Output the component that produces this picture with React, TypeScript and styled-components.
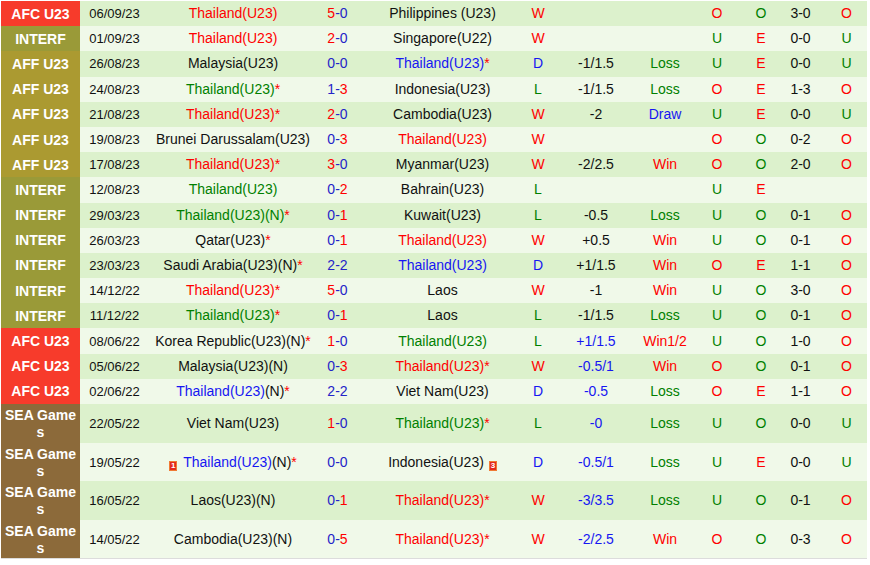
import React from 'react';
import styled, { createGlobalStyle } from 'styled-components';

const tones = {
  red: '#ff0000',
  blue: '#1616f2',
  navy: '#2424c8',
  green: '#008000',
  black: '#111111',
};

type Tone = keyof typeof tones;
type Part = [string, Tone];
type Team = { parts: Part[]; star?: boolean; card?: string };
type League = 'AFC U23' | 'INTERF' | 'AFF U23' | 'SEA Games';

type Match = {
  league: League;
  date: string;
  home: Team;
  score: [number, number];
  away: Team;
  wl: 'W' | 'D' | 'L';
  hcp: string;
  hcpBlue?: boolean;
  res: string;
  uo: string;
  eo: string;
  ht: string;
  last: string;
};

const leagueBg: Record<League, string> = {
  'AFC U23': '#f73b2b',
  INTERF: '#9a9a38',
  'AFF U23': '#ab9a31',
  'SEA Games': '#8c6a3a',
};

const team = (name: string, tone: Tone = 'black', star = false): Team => ({
  parts: [[name, tone]],
  star,
});

const TH = 'Thailand(U23)';

const matches: Match[] = [
  { league: 'AFC U23', date: '06/09/23', home: team(TH, 'red'), score: [5, 0], away: team('Philippines (U23)'), wl: 'W', hcp: '', res: '', uo: 'O', eo: 'O', ht: '3-0', last: 'O' },
  { league: 'INTERF', date: '01/09/23', home: team(TH, 'red'), score: [2, 0], away: team('Singapore(U22)'), wl: 'W', hcp: '', res: '', uo: 'U', eo: 'E', ht: '0-0', last: 'U' },
  { league: 'AFF U23', date: '26/08/23', home: team('Malaysia(U23)'), score: [0, 0], away: team(TH, 'blue', true), wl: 'D', hcp: '-1/1.5', res: 'Loss', uo: 'U', eo: 'E', ht: '0-0', last: 'U' },
  { league: 'AFF U23', date: '24/08/23', home: team(TH, 'green', true), score: [1, 3], away: team('Indonesia(U23)'), wl: 'L', hcp: '-1/1.5', res: 'Loss', uo: 'O', eo: 'E', ht: '1-3', last: 'O' },
  { league: 'AFF U23', date: '21/08/23', home: team(TH, 'red', true), score: [2, 0], away: team('Cambodia(U23)'), wl: 'W', hcp: '-2', res: 'Draw', uo: 'U', eo: 'E', ht: '0-0', last: 'U' },
  { league: 'AFF U23', date: '19/08/23', home: team('Brunei Darussalam(U23)'), score: [0, 3], away: team(TH, 'red'), wl: 'W', hcp: '', res: '', uo: 'O', eo: 'O', ht: '0-2', last: 'O' },
  { league: 'AFF U23', date: '17/08/23', home: team(TH, 'red', true), score: [3, 0], away: team('Myanmar(U23)'), wl: 'W', hcp: '-2/2.5', res: 'Win', uo: 'O', eo: 'O', ht: '2-0', last: 'O' },
  { league: 'INTERF', date: '12/08/23', home: team(TH, 'green'), score: [0, 2], away: team('Bahrain(U23)'), wl: 'L', hcp: '', res: '', uo: 'U', eo: 'E', ht: '', last: '' },
  { league: 'INTERF', date: '29/03/23', home: team('Thailand(U23)(N)', 'green', true), score: [0, 1], away: team('Kuwait(U23)'), wl: 'L', hcp: '-0.5', res: 'Loss', uo: 'U', eo: 'O', ht: '0-1', last: 'O' },
  { league: 'INTERF', date: '26/03/23', home: team('Qatar(U23)', 'black', true), score: [0, 1], away: team(TH, 'red'), wl: 'W', hcp: '+0.5', res: 'Win', uo: 'U', eo: 'O', ht: '0-1', last: 'O' },
  { league: 'INTERF', date: '23/03/23', home: team('Saudi Arabia(U23)(N)', 'black', true), score: [2, 2], away: team(TH, 'blue'), wl: 'D', hcp: '+1/1.5', res: 'Win', uo: 'O', eo: 'E', ht: '1-1', last: 'O' },
  { league: 'INTERF', date: '14/12/22', home: team(TH, 'red', true), score: [5, 0], away: team('Laos'), wl: 'W', hcp: '-1', res: 'Win', uo: 'U', eo: 'O', ht: '3-0', last: 'O' },
  { league: 'INTERF', date: '11/12/22', home: team(TH, 'green', true), score: [0, 1], away: team('Laos'), wl: 'L', hcp: '-1/1.5', res: 'Loss', uo: 'U', eo: 'O', ht: '0-1', last: 'O' },
  { league: 'AFC U23', date: '08/06/22', home: team('Korea Republic(U23)(N)', 'black', true), score: [1, 0], away: team(TH, 'green'), wl: 'L', hcp: '+1/1.5', hcpBlue: true, res: 'Win1/2', uo: 'U', eo: 'O', ht: '1-0', last: 'O' },
  { league: 'AFC U23', date: '05/06/22', home: team('Malaysia(U23)(N)'), score: [0, 3], away: team(TH, 'red', true), wl: 'W', hcp: '-0.5/1', hcpBlue: true, res: 'Win', uo: 'O', eo: 'O', ht: '0-1', last: 'O' },
  { league: 'AFC U23', date: '02/06/22', home: { parts: [[TH, 'blue'], ['(N)', 'black']], star: true }, score: [2, 2], away: team('Viet Nam(U23)'), wl: 'D', hcp: '-0.5', hcpBlue: true, res: 'Loss', uo: 'O', eo: 'E', ht: '1-1', last: 'O' },
  { league: 'SEA Games', date: '22/05/22', home: team('Viet Nam(U23)'), score: [1, 0], away: team(TH, 'green', true), wl: 'L', hcp: '-0', hcpBlue: true, res: 'Loss', uo: 'U', eo: 'O', ht: '0-0', last: 'U' },
  { league: 'SEA Games', date: '19/05/22', home: { parts: [[TH, 'blue'], ['(N)', 'black']], star: true, card: '1' }, score: [0, 0], away: { parts: [['Indonesia(U23)', 'black']], card: '3' }, wl: 'D', hcp: '-0.5/1', hcpBlue: true, res: 'Loss', uo: 'U', eo: 'E', ht: '0-0', last: 'U' },
  { league: 'SEA Games', date: '16/05/22', home: team('Laos(U23)(N)'), score: [0, 1], away: team(TH, 'red', true), wl: 'W', hcp: '-3/3.5', hcpBlue: true, res: 'Loss', uo: 'U', eo: 'O', ht: '0-1', last: 'O' },
  { league: 'SEA Games', date: '14/05/22', home: team('Cambodia(U23)(N)'), score: [0, 5], away: team(TH, 'red', true), wl: 'W', hcp: '-2/2.5', hcpBlue: true, res: 'Win', uo: 'O', eo: 'O', ht: '0-3', last: 'O' },
];

const wlTone: Record<string, Tone> = { W: 'red', D: 'blue', L: 'green' };
const resTone: Record<string, Tone> = { Win: 'red', 'Win1/2': 'red', Loss: 'green', Draw: 'blue' };
const uoTone: Record<string, Tone> = { O: 'red', U: 'green' };
const eoTone: Record<string, Tone> = { O: 'green', E: 'red' };

const colWidths = [79, 69, 168, 41, 169, 22, 94, 44, 60, 28, 51, 41];

const GlobalStyle = createGlobalStyle`
  html, body {
    margin: 0;
    padding: 0;
    background: #ffffff;
  }
  body {
    font-family: "Liberation Sans", Arial, sans-serif;
  }
`;

const Wrap = styled.div`
  width: 870px;
  padding: 1px 0 0 1px;
  box-sizing: border-box;
`;

const Table = styled.table`
  width: 866px;
  table-layout: fixed;
  border-collapse: collapse;
  border-bottom: 1px solid #dcdcdc;
`;

const Row = styled.tr<{ $alt: boolean; $tall: boolean }>`
  height: ${(p) => (p.$tall ? '38.7px' : '25.2px')};
  background: ${(p) => (p.$alt ? '#f0f9e9' : '#dcf1cc')};
`;

const LeagueCell = styled.td<{ $bg: string }>`
  background: ${(p) => p.$bg};
  color: #ffffff;
  font-weight: bold;
  font-size: 14px;
  line-height: 17px;
  text-align: center;
  padding: 1px 3px 0;
  word-break: break-all;
`;

const Cell = styled.td<{ $tone?: Tone }>`
  padding: 0;
  text-align: center;
  vertical-align: middle;
  white-space: nowrap;
  font-size: 14px;
  line-height: 17px;
  color: ${(p) => tones[p.$tone ?? 'black']};
`;

const DateCell = styled(Cell)`
  font-size: 13px;
`;

const Ink = styled.span<{ $tone: Tone }>`
  color: ${(p) => tones[p.$tone]};
`;

const Card = styled.span<{ $after?: boolean }>`
  display: inline-block;
  box-sizing: border-box;
  width: 8px;
  height: 10px;
  margin: ${(p) => (p.$after ? '0 0 0 5px' : '0 6px 0 0')};
  background: #e4291c;
  border: 1px solid #f07a34;
  color: #ffffff;
  font-size: 8px;
  font-weight: bold;
  line-height: 8px;
  text-align: center;
  vertical-align: -1px;
`;

const TeamName = ({ t, after }: { t: Team; after?: boolean }) => (
  <>
    {t.card && !after && <Card>{t.card}</Card>}
    {t.parts.map(([txt, tone], i) => (
      <Ink key={i} $tone={tone}>
        {txt}
      </Ink>
    ))}
    {t.star && <Ink $tone="red">*</Ink>}
    {t.card && after && <Card $after>{t.card}</Card>}
  </>
);

const Score = ({ s }: { s: [number, number] }) => {
  const [h, a] = s;
  return (
    <>
      <Ink $tone={h > a ? 'red' : 'navy'}>{h}</Ink>
      <Ink $tone="navy">-</Ink>
      <Ink $tone={a > h ? 'red' : 'navy'}>{a}</Ink>
    </>
  );
};

const App = () => (
  <>
    <GlobalStyle />
    <Wrap>
      <Table>
        <colgroup>
          {colWidths.map((w, i) => (
            <col key={i} style={{ width: w }} />
          ))}
        </colgroup>
        <tbody>
          {matches.map((m, i) => (
            <Row key={i} $alt={i % 2 === 1} $tall={m.league === 'SEA Games'}>
              <LeagueCell $bg={leagueBg[m.league]}>{m.league}</LeagueCell>
              <DateCell>{m.date}</DateCell>
              <Cell>
                <TeamName t={m.home} />
              </Cell>
              <Cell>
                <Score s={m.score} />
              </Cell>
              <Cell>
                <TeamName t={m.away} after />
              </Cell>
              <Cell $tone={wlTone[m.wl]}>{m.wl}</Cell>
              <Cell $tone={m.hcpBlue ? 'blue' : 'black'}>{m.hcp}</Cell>
              <Cell $tone={resTone[m.res]}>{m.res}</Cell>
              <Cell $tone={uoTone[m.uo]}>{m.uo}</Cell>
              <Cell $tone={eoTone[m.eo]}>{m.eo}</Cell>
              <Cell>{m.ht}</Cell>
              <Cell $tone={uoTone[m.last]}>{m.last}</Cell>
            </Row>
          ))}
        </tbody>
      </Table>
    </Wrap>
  </>
);

export default App;
